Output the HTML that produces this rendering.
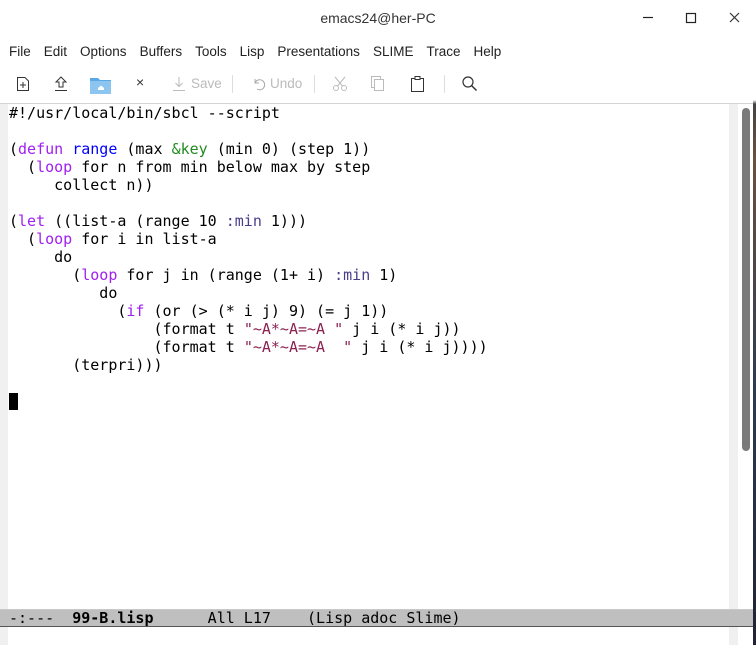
<!DOCTYPE html>
<html><head><meta charset="utf-8"><style>
*{margin:0;padding:0;box-sizing:border-box}
body{width:756px;height:645px;background:#fff;position:relative;overflow:hidden;font-family:"Liberation Sans","DejaVu Sans",sans-serif}
.title{position:absolute;top:10px;left:0;width:756px;text-align:center;font-size:14px;color:#333}
.menu{position:absolute;top:44px;left:9px;font-size:13.5px;color:#222;white-space:nowrap}
.menu span{margin-right:13px}
.tb{position:absolute;top:72px;left:0;width:740px;height:24px}
.tb>*{position:absolute}
.sep{width:1px;height:18px;background:#ddd;top:3px}
.gray{color:#bbb;font-size:13.5px;top:4px}
.hr{position:absolute;top:103px;left:0;width:753px;height:1px;background:#d4d4d4}
.fringeL{position:absolute;top:104px;left:0;width:8px;height:541px;background:#f0f0f0}
.fringeR{position:absolute;top:104px;left:729px;width:9px;height:541px;background:#f0f0f0}
.sb{position:absolute;top:104px;left:738px;width:15px;height:541px;background:#fff}
.thumb{position:absolute;top:108px;left:742px;width:8px;height:343px;background:#7a7a7a;border-radius:4px}
.edge{position:absolute;top:0;left:753px;width:3px;height:645px;background:linear-gradient(#fff 0,#fff 100px,#444 104px,#6a5040 160px,#2a3a50 400px,#223 645px)}
pre{position:absolute;top:104px;left:9px;font-family:"DejaVu Sans Mono",monospace;font-size:15px;line-height:18px;color:#000}
.k{color:#a020f0}.f{color:#0000ff}.b{color:#228b22}.c{color:#483d8b}.s{color:#8b2252}
.cur{display:inline-block;width:9px;height:17px;background:#000;vertical-align:-4px}
.mode{position:absolute;top:609px;left:0;width:753px;height:18px;background:#bfbfbf;border-top:1px solid #c8c8c8;border-bottom:1px solid #555;font-family:"DejaVu Sans Mono",monospace;font-size:15px;line-height:16px;padding-left:9px;white-space:pre;color:#000}
</style></head><body>
<div class="title">emacs24@her-PC</div>
<svg style="position:absolute;top:12px;left:640px" width="100" height="14">
<path d="M3 5.5H13" stroke="#222" stroke-width="1.2"/>
<rect x="46.5" y="1.5" width="9" height="9" fill="none" stroke="#222" stroke-width="1.2"/>
<path d="M90 1L99 10M99 1L90 10" stroke="#333" stroke-width="1.2"/>
</svg>
<div class="menu"><span>File</span><span>Edit</span><span>Options</span><span>Buffers</span><span>Tools</span><span>Lisp</span><span>Presentations</span><span>SLIME</span><span>Trace</span><span>Help</span></div>
<div class="tb">
<svg style="left:16px;top:4px" width="14" height="16"><path d="M1.5 1.5H9L12.5 5V14.5H1.5Z" fill="none" stroke="#333"/><path d="M7 6V12M4 9H10" stroke="#333"/></svg>
<svg style="left:54px;top:4px" width="14" height="16"><path d="M7 1L2 6H5V11H9V6H12Z" fill="none" stroke="#333"/><path d="M1 14.5H13" stroke="#333"/></svg>
<svg style="left:90px;top:4px" width="22" height="18"><path d="M0 2H8L10 4H21V18H0Z" fill="#5aa9e6"/><path d="M0 5H21V18H0Z" fill="#8cc6f0"/><path d="M8 12L11 9.5L14 12V14H8Z" fill="#fff"/></svg>
<div style="left:136px;top:2px;font-size:14px;color:#333">×</div>
<svg style="left:172px;top:4px" width="14" height="16"><path d="M7 1V10M3.5 7L7 10.5L10.5 7M1 14.5H13" fill="none" stroke="#bbb"/></svg>
<div class="gray" style="left:191px">Save</div>
<div class="sep" style="left:232px"></div>
<svg style="left:252px;top:5px" width="14" height="14"><path d="M3 2V6H7M3 6A5 5 0 1 1 5 12" fill="none" stroke="#aaa"/></svg>
<div class="gray" style="left:270px">Undo</div>
<div class="sep" style="left:314px"></div>
<svg style="left:332px;top:4px" width="16" height="16"><circle cx="4" cy="12" r="2.5" fill="none" stroke="#bbb"/><circle cx="12" cy="12" r="2.5" fill="none" stroke="#bbb"/><path d="M5.5 10L13 1M10.5 10L3 1" stroke="#bbb"/></svg>
<svg style="left:371px;top:4px" width="14" height="16"><rect x="0.5" y="0.5" width="9" height="11" fill="none" stroke="#bbb"/><rect x="3.5" y="3.5" width="9" height="11" fill="#fff" stroke="#bbb"/></svg>
<svg style="left:411px;top:3px" width="14" height="17"><rect x="0.5" y="3.5" width="12" height="13" fill="none" stroke="#333"/><rect x="4" y="1.5" width="5" height="3" fill="#fff" stroke="#333"/></svg>
<div class="sep" style="left:444px"></div>
<svg style="left:462px;top:4px" width="16" height="16"><circle cx="6" cy="6" r="5" fill="none" stroke="#333" stroke-width="1.2"/><path d="M9.5 9.5L14.5 14.5" stroke="#333" stroke-width="1.5"/></svg>
</div>
<div class="hr"></div>
<div class="fringeL"></div><div class="fringeR"></div><div class="sb"></div><div class="thumb"></div><div class="edge"></div>
<pre>#!/usr/local/bin/sbcl --script

(<span class="k">defun</span> <span class="f">range</span> (max <span class="b">&amp;key</span> (min 0) (step 1))
  (<span class="k">loop</span> for n from min below max by step
     collect n))

(<span class="k">let</span> ((list-a (range 10 <span class="c">:min</span> 1)))
  (<span class="k">loop</span> for i in list-a
     do
       (<span class="k">loop</span> for j in (range (1+ i) <span class="c">:min</span> 1)
          do
            (<span class="k">if</span> (or (&gt; (* i j) 9) (= j 1))
                (format t <span class="s">"~A*~A=~A "</span> j i (* i j))
                (format t <span class="s">"~A*~A=~A  "</span> j i (* i j))))
       (terpri)))

<span class="cur"></span></pre>
<div class="mode">-:---  <b>99-B.lisp</b>      All L17    (Lisp adoc Slime)</div>
</body></html>
